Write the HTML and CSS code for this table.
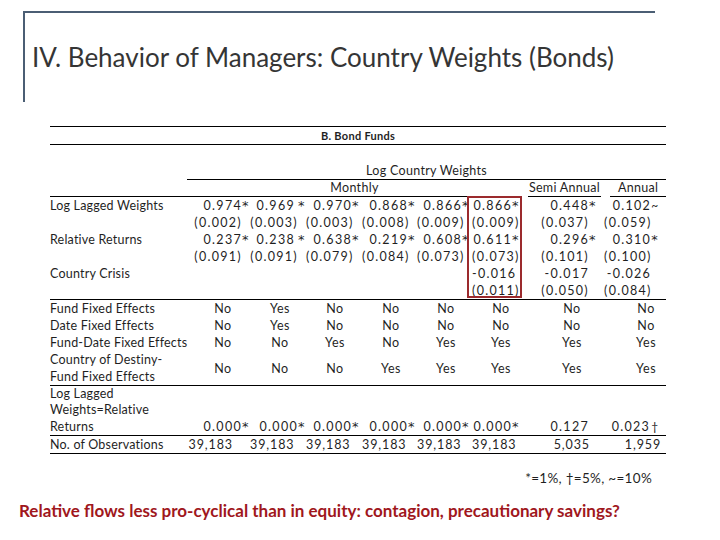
FILE: index.html
```html
<!DOCTYPE html>
<html lang="en">
<head>
<meta charset="utf-8">
<title>IV. Behavior of Managers: Country Weights (Bonds)</title>
<link rel="stylesheet" href="styles.css">
</head>
<body>
<div class="slide">
  <header class="head">
    <h1 class="title">IV. Behavior of Managers: Country Weights (Bonds)</h1>
  </header>

  <section class="tblwrap">
    <table class="reg">
      <colgroup>
        <col class="w-lbl"><col class="w-c1"><col class="w-c2"><col class="w-c3"><col class="w-c4"><col class="w-c5"><col class="w-c6"><col class="w-c7"><col class="w-c8">
      </colgroup>
      <tbody>
        <tr class="r-panel"><td colspan="9" class="panel">B. Bond Funds</td></tr>
        <tr class="r-blank"><td colspan="9">&nbsp;</td></tr>
        <tr><th></th><td colspan="8" class="dep">Log Country Weights</td></tr>
        <tr class="r-freq">
          <th><div class="ul">&nbsp;</div></th>
          <td colspan="6"><div class="ul mo">Monthly</div></td>
          <td><div class="ul semi">Semi Annual</div></td>
          <td><div class="ul ann">Annual</div></td>
        </tr>
        <tr><th>Log Lagged Weights</th>
          <td class="n">0.974<span class="st">*</span></td>
          <td class="n">0.969<span class="st sp">*</span></td>
          <td class="n">0.970<span class="st">*</span></td>
          <td class="n">0.868<span class="st">*</span></td>
          <td class="n">0.866<span class="st">*</span></td>
          <td class="n">0.866<span class="st">*</span></td>
          <td class="n">0.448<span class="st">*</span></td>
          <td class="n">0.102<span class="st tl">~</span></td>
        </tr>
        <tr><th></th>
          <td class="n">(0.002)</td><td class="n">(0.003)</td><td class="n">(0.003)</td><td class="n">(0.008)</td><td class="n">(0.009)</td><td class="n">(0.009)</td><td class="n">(0.037)</td><td class="n">(0.059)</td>
        </tr>
        <tr><th>Relative Returns</th>
          <td class="n">0.237<span class="st">*</span></td>
          <td class="n">0.238<span class="st sp">*</span></td>
          <td class="n">0.638<span class="st">*</span></td>
          <td class="n">0.219<span class="st">*</span></td>
          <td class="n">0.608<span class="st">*</span></td>
          <td class="n">0.611<span class="st">*</span></td>
          <td class="n">0.296<span class="st">*</span></td>
          <td class="n">0.310<span class="st">*</span></td>
        </tr>
        <tr><th></th>
          <td class="n">(0.091)</td><td class="n">(0.091)</td><td class="n">(0.079)</td><td class="n">(0.084)</td><td class="n">(0.073)</td><td class="n">(0.073)</td><td class="n">(0.101)</td><td class="n">(0.100)</td>
        </tr>
        <tr><th>Country Crisis</th>
          <td></td><td></td><td></td><td></td><td></td>
          <td class="n">-0.016</td><td class="n">-0.017</td><td class="n">-0.026</td>
        </tr>
        <tr class="r-endsec"><th></th>
          <td></td><td></td><td></td><td></td><td></td>
          <td class="n">(0.011)</td><td class="n">(0.050)</td><td class="n">(0.084)</td>
        </tr>
        <tr><th>Fund Fixed Effects</th>
          <td class="y">No</td><td class="y">Yes</td><td class="y">No</td><td class="y">No</td><td class="y">No</td><td class="y">No</td><td class="y">No</td><td class="y">No</td>
        </tr>
        <tr><th>Date Fixed Effects</th>
          <td class="y">No</td><td class="y">Yes</td><td class="y">No</td><td class="y">No</td><td class="y">No</td><td class="y">No</td><td class="y">No</td><td class="y">No</td>
        </tr>
        <tr><th>Fund-Date Fixed Effects</th>
          <td class="y">No</td><td class="y">No</td><td class="y">Yes</td><td class="y">No</td><td class="y">Yes</td><td class="y">Yes</td><td class="y">Yes</td><td class="y">Yes</td>
        </tr>
        <tr class="r-endsec"><th>Country of Destiny-<br>Fund Fixed Effects</th>
          <td class="y">No</td><td class="y">No</td><td class="y">No</td><td class="y">Yes</td><td class="y">Yes</td><td class="y">Yes</td><td class="y">Yes</td><td class="y">Yes</td>
        </tr>
        <tr class="r-endsec r-bottom"><th>Log Lagged<br>Weights=Relative<br>Returns</th>
          <td class="n">0.000<span class="st">*</span></td>
          <td class="n">0.000<span class="st">*</span></td>
          <td class="n">0.000<span class="st">*</span></td>
          <td class="n">0.000<span class="st">*</span></td>
          <td class="n">0.000<span class="st">*</span></td>
          <td class="n">0.000<span class="st">*</span></td>
          <td class="n">0.127</td>
          <td class="n">0.023<span class="st dg">†</span></td>
        </tr>
        <tr class="r-endsec"><th>No. of Observations</th>
          <td class="o">39,183</td><td class="o">39,183</td><td class="o">39,183</td><td class="o">39,183</td><td class="o">39,183</td><td class="o">39,183</td><td class="o">5,035</td><td class="o">1,959</td>
        </tr>
      </tbody>
    </table>
    <div class="hl-box" aria-hidden="true"></div>
  </section>

  <p class="note">*=1%, †=5%, ~=10%</p>
  <p class="concl">Relative flows less pro-cyclical than in equity: contagion, precautionary savings?</p>
</div>
</body>
</html>
```

FILE: styles.css
```css
html, body {
  margin: 0;
  padding: 0;
  background: #ffffff;
}

.slide {
  width: 720px;
  height: 540px;
  overflow: hidden;
  font-family: Lato, "Liberation Sans", sans-serif;
  color: #1f1f1f;
}

/* ---------- title frame ---------- */
.head {
  margin: 11px 0 0 23px;
  width: 630px;
  height: 89px;
  border-top: 2px solid #4b5e74;
  border-left: 2px solid #4b5e74;
}

.title {
  margin: 0;
  padding: 27px 0 0 7px;
  font-weight: 400;
  font-size: 26px;
  line-height: 34px;
  color: #353535;
  white-space: nowrap;
}

/* ---------- regression table ---------- */
.tblwrap {
  position: relative;
  margin: 24px 0 0 50px;
  width: 616px;
}

.reg {
  width: 616px;
  table-layout: fixed;
  border-collapse: collapse;
  font-size: 12.5px;
  line-height: 17px;
  color: #1f1f1f;
}

.w-lbl { width: 137px; }
.w-c1 { width: 63px; }
.w-c2 { width: 56px; }
.w-c3 { width: 56px; }
.w-c4 { width: 55px; }
.w-c5 { width: 55px; }
.w-c6 { width: 55px; }
.w-c7 { width: 77px; }
.w-c8 { width: 62px; }

.reg th,
.reg td {
  padding: 0;
  height: 17px;
  white-space: nowrap;
  vertical-align: middle;
}

.reg th {
  text-align: left;
  font-weight: 400;
  letter-spacing: 0.2px;
}

.panel {
  text-align: center;
  font-weight: 700;
  font-size: 11px;
  letter-spacing: 0.3px;
  border-top: 1px solid #000;
  border-bottom: 1px solid #000;
}

.dep {
  text-align: center;
  letter-spacing: 0.3px;
  border-bottom: 1px solid #000;
}

.ul {
  line-height: 16px;
  border-bottom: 1px solid #000;
  text-align: center;
  letter-spacing: 0.3px;
}

.mo { margin-right: 5px; }
.semi { margin: 0 3px 0 1px; }
.ann { margin-left: 6px; }

.r-endsec th,
.r-endsec td {
  border-bottom: 1px solid #000;
}

.r-bottom th,
.r-bottom td {
  vertical-align: bottom;
  line-height: 16.4px;
}

/* numbers: right aligned, significance marks hang */
.n {
  text-align: right;
  letter-spacing: 1.3px;
}

.st {
  display: inline-block;
  width: 0;
  height: 10px;
  line-height: 10px;
  text-align: left;
  font-family: "DejaVu Sans", sans-serif;
  font-size: 13px;
  letter-spacing: 0;
}

.st.sp {
  padding-left: 3px;
}

.st.tl {
  font-family: Lato, sans-serif;
  font-size: 12px;
}

.st.dg {
  padding-left: 1px;
  font-family: Lato, sans-serif;
  font-size: 12px;
}

.n:nth-child(2) { padding-right: 8px; }
.n:nth-child(3) { padding-right: 8px; }
.n:nth-child(4) { padding-right: 10px; }
.n:nth-child(5) { padding-right: 9px; }
.n:nth-child(6) { padding-right: 10px; }
.n:nth-child(7) { padding-right: 15px; }
.n:nth-child(8) { padding-right: 15px; }
.n:nth-child(9) { padding-right: 15px; }

/* yes / no */
.y {
  text-align: center;
  letter-spacing: 0.6px;
}

.y:nth-child(2) { padding-left: 9px; }
.y:nth-child(3) { padding-left: 4px; }
.y:nth-child(4) { padding-left: 2px; }
.y:nth-child(5) { padding-left: 3px; }
.y:nth-child(6) { padding-left: 3px; }
.y:nth-child(7) { padding-left: 3px; }
.y:nth-child(8) { padding-left: 13px; }
.y:nth-child(9) { padding-left: 22px; }

/* observations */
.o {
  text-align: right;
  letter-spacing: 0.9px;
}

.o:nth-child(2) { padding-right: 17px; }
.o:nth-child(3) { padding-right: 18px; }
.o:nth-child(4) { padding-right: 18px; }
.o:nth-child(5) { padding-right: 17px; }
.o:nth-child(6) { padding-right: 17px; }
.o:nth-child(7) { padding-right: 15px; }
.o:nth-child(8) { padding-right: 14px; }
.o:nth-child(9) { padding-right: 5px; }

/* highlight box over column 6 */
.hl-box {
  position: absolute;
  left: 417px;
  top: 70px;
  width: 51px;
  height: 98px;
  border: 2px solid #9b2a2d;
}

/* ---------- footer text ---------- */
.note {
  margin: 16px 68px 0 0;
  text-align: right;
  font-size: 13.5px;
  line-height: 17px;
  color: #1f1f1f;
  letter-spacing: 0.3px;
}

.concl {
  margin: 14px 0 0 19px;
  font-size: 17px;
  line-height: 20px;
  font-weight: 700;
  color: #a0171d;
  white-space: nowrap;
}
```
